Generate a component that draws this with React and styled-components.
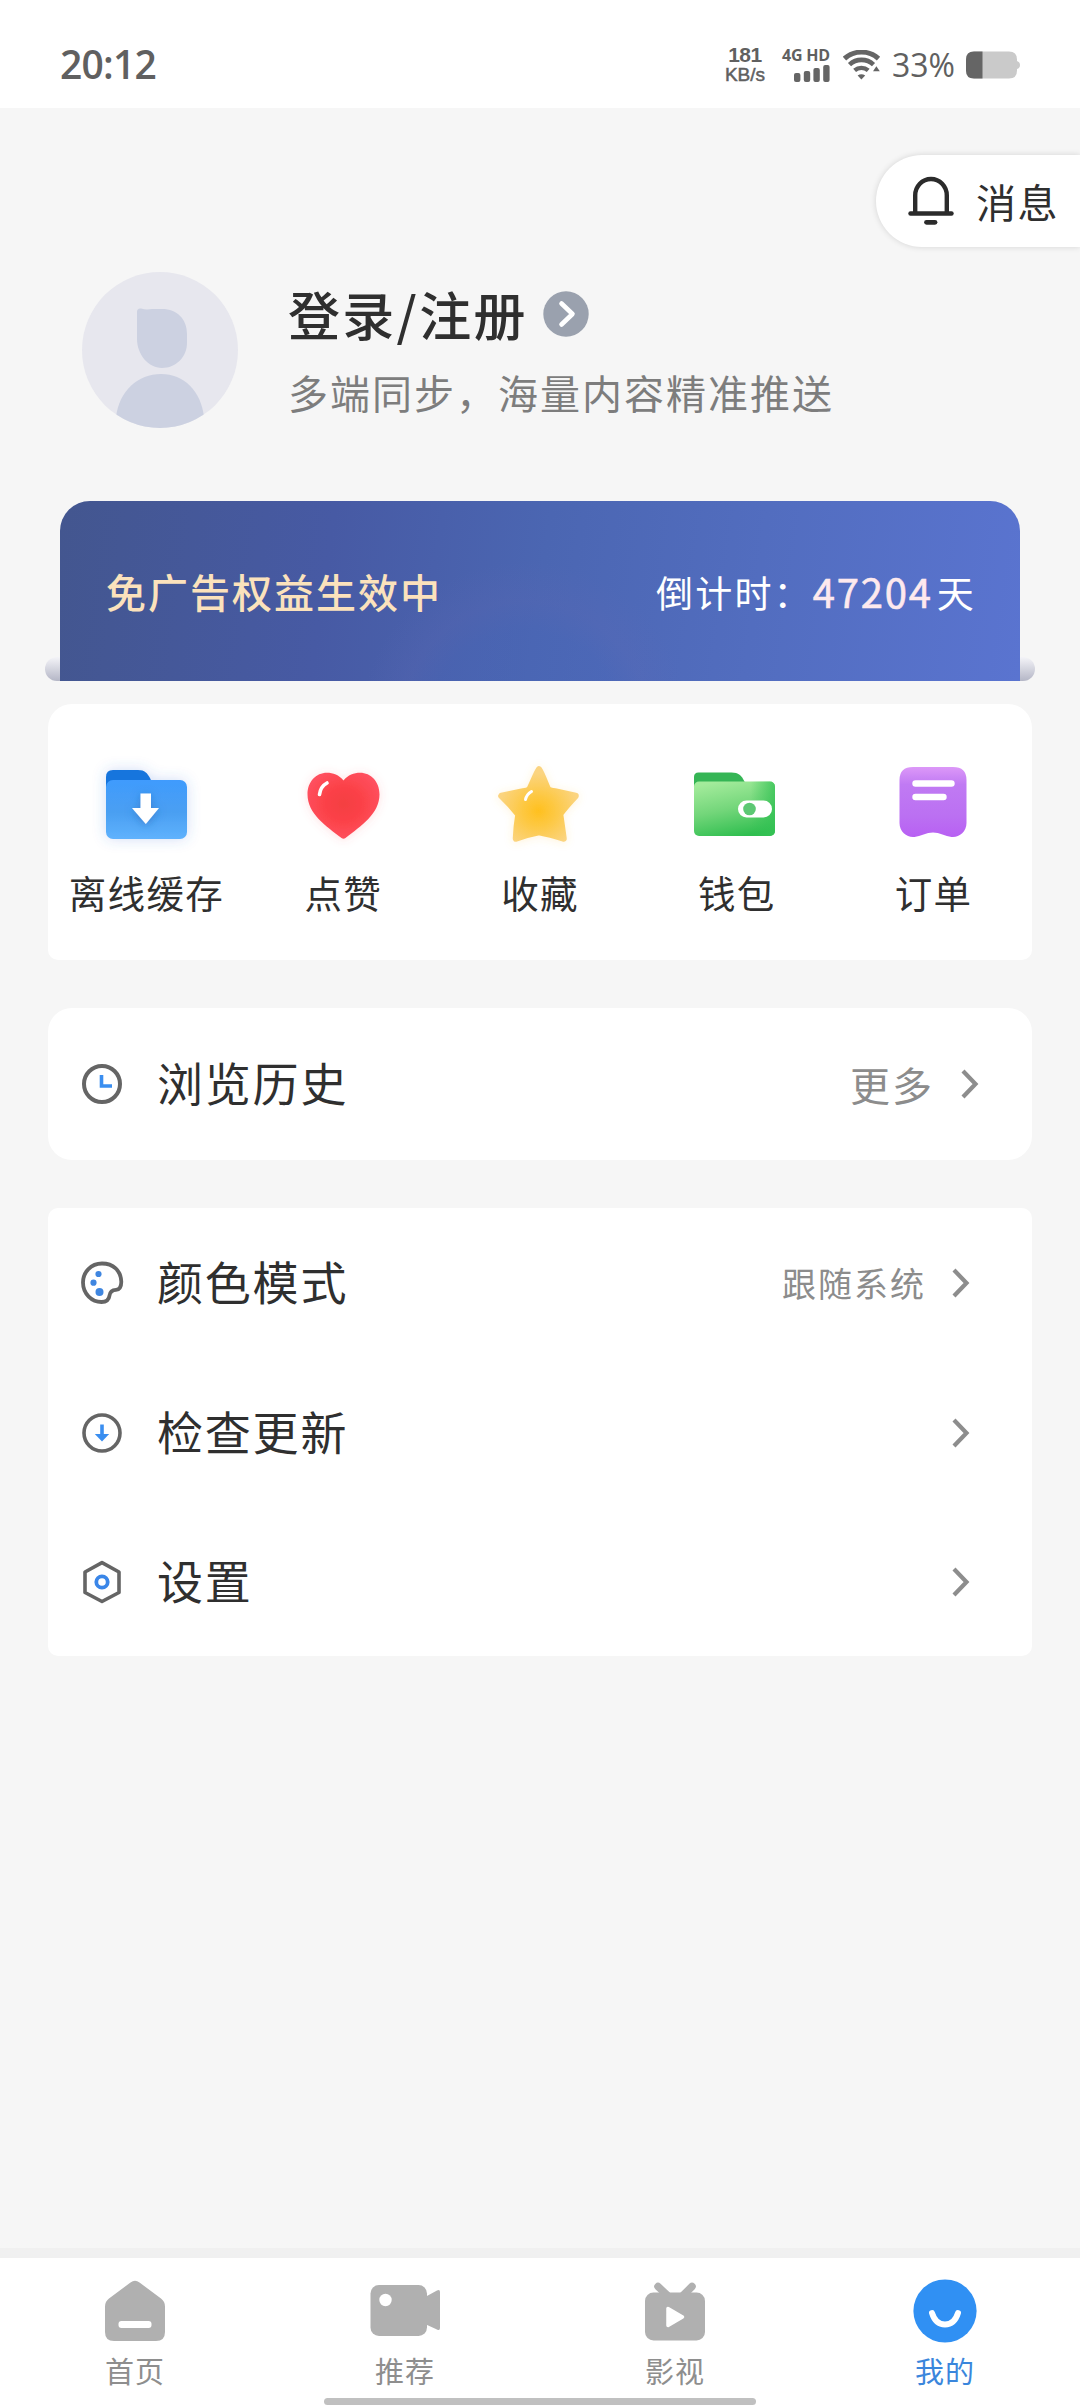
import styled, { createGlobalStyle } from 'styled-components';

const GlobalStyle = createGlobalStyle`
  * {
    box-sizing: border-box;
  }

  body {
    margin: 0;
    background: #f6f6f6;
    font-family: 'Noto Sans CJK SC', 'Noto Sans', sans-serif;
    color: #2f2f2f;
  }

  svg {
    display: block;
    flex-shrink: 0;
  }
`;

const WifiIcon = () => (
  <svg width="38" height="30" viewBox="0 0 38 30" fill="none" stroke="#656565">
    <path d="M1.5 8.600a25.500 25.500 0 0 1 34 0" strokeWidth="5" />
    <path d="M6.500 14.600a17.500 17.500 0 0 1 24 0" strokeWidth="4.600" />
    <path d="M11.600 20.400a10.500 10.500 0 0 1 13.600 0" strokeWidth="4.400" />
    <path d="M14.600 25.400l3.800 4.200 3.800-4.200q-3.800-2.400-7.600 0z" fill="#656565" stroke="none" />
    <path d="M30 21.200l3.400-5 3.400 5z" fill="#656565" stroke="none" />
  </svg>
);

const SignalIcon = () => (
  <svg width="36" height="17" viewBox="0 0 36 17" fill="#656565">
    <rect x="0" y="8" width="6.4" height="9" rx="2" />
    <rect x="9.8" y="6" width="6.4" height="11" rx="2" />
    <rect x="19.4" y="3" width="6.4" height="14" rx="2" />
    <rect x="29.2" y="0" width="6.4" height="17" rx="2" />
  </svg>
);

const BatteryIcon = () => (
  <svg width="54" height="28" viewBox="0 0 54 28">
    <path d="M8 0.5h35q8 0 8 8v1.5q3 1 3 4t-3 4v1.500q0 8-8 8H8q-8 0-8-8v-11q0-8 8-8z" fill="#cacaca" />
    <path d="M16.500 0.500H8q-8 0-8 8v11q0 8 8 8h8.500z" fill="#656565" />
  </svg>
);

const BellIcon = () => (
  <svg width="46" height="50" viewBox="0 0 46 50" fill="none" stroke="#2b2b2b" strokeWidth="4.400" strokeLinecap="round">
    <path d="M7.200 36V19.500a15.800 16.500 0 0 1 31.600 0V36" />
    <path d="M2.500 37.500h41" />
    <path d="M18.500 46.300h8.500" strokeWidth="4.800" />
  </svg>
);

const AvatarIcon = () => (
  <svg width="156" height="156" viewBox="0 0 156 156">
    <defs>
      <clipPath id="avatarClip">
        <circle cx="78" cy="78" r="78" />
      </clipPath>
    </defs>
    <circle cx="78" cy="78" r="78" fill="#e7e7ee" />
    <g clipPath="url(#avatarClip)" fill="#ccd1e1">
      <path d="M55 40q0-4 4-3.500 5 1.500 11 0.500h10c15 0 25 10 25 25v9c0 14-11 25-25 25s-25-14-25-29z" />
      <path d="M34 145c3-26 22-43 45-43s40 17 43 43v15H34z" />
    </g>
  </svg>
);

const ArrowBadge = () => (
  <svg width="46" height="46" viewBox="0 0 46 46" fill="none">
    <circle cx="23" cy="23" r="22.700" fill="#9aa1ae" />
    <path d="M18.500 12.500L29.500 23 18.500 33.500" stroke="#fff" strokeWidth="4.600" strokeLinecap="round" strokeLinejoin="round" />
  </svg>
);

const ChevronIcon = () => (
  <svg width="20" height="32" viewBox="0 0 20 32" fill="none" stroke="#8d8d8d" strokeWidth="4.200">
    <path d="M3 3L15.500 16 3 29" />
  </svg>
);

const DownloadFolder = () => (
  <svg width="96" height="96" viewBox="0 0 96 96" overflow="visible">
    <defs>
      <linearGradient id="folderFront" x1="0" y1="0" x2="0" y2="1">
        <stop offset="0" stopColor="#3f9bfd" />
        <stop offset="0.550" stopColor="#4a9ff2" />
        <stop offset="1" stopColor="#5fb2fd" />
      </linearGradient>
      <filter id="folderShadow" x="-30%" y="-30%" width="160%" height="160%">
        <feDropShadow dx="0" dy="0" stdDeviation="7" floodColor="#3b6fd8" floodOpacity="0.240" />
      </filter>
      <filter id="arrowShadow" x="-50%" y="-50%" width="200%" height="200%">
        <feDropShadow dx="0" dy="2" stdDeviation="4" floodColor="#1e5fb0" floodOpacity="0.500" />
      </filter>
    </defs>
    <g filter="url(#folderShadow)">
      <path d="M8 34V21q0-7 7-7h25c7 0 9 3 12 8l3 7v10H8z" fill="#1474dd" />
      <rect x="8" y="24" width="81" height="59" rx="7" fill="url(#folderFront)" />
    </g>
    <path d="M42.500 37.500h10.500V52h8L47.800 68 34 52h8.500z" fill="#fff" filter="url(#arrowShadow)" />
  </svg>
);

const HeartIcon = () => (
  <svg width="96" height="96" viewBox="0 0 96 96" overflow="visible">
    <defs>
      <radialGradient id="heartFill" cx="0.500" cy="0.470" r="0.550">
        <stop offset="0" stopColor="#f43f42" />
        <stop offset="0.450" stopColor="#fb4147" />
        <stop offset="1" stopColor="#ff505f" />
      </radialGradient>
      <filter id="heartShadow" x="-30%" y="-30%" width="160%" height="160%">
        <feDropShadow dx="0" dy="1" stdDeviation="5" floodColor="#ff5060" floodOpacity="0.180" />
      </filter>
    </defs>
    <path
      d="M48.500 24.500C53 19 59 16.800 65 16.800c11 0 19.500 9 19.500 21.500C84.500 58 66 70 50.500 82q-2 1.500-4 0C31 70 12.500 58 12.500 38.300c0-12.500 8.500-21.500 19.500-21.500 6 0 12 2.200 16.500 7.700z"
      fill="url(#heartFill)"
      filter="url(#heartShadow)"
    />
    <path d="M24.500 38.500q1-8 7.500-11.500" fill="none" stroke="#fff" strokeWidth="3.600" strokeLinecap="round" />
  </svg>
);

const StarIcon = () => (
  <svg width="96" height="96" viewBox="0 0 96 96" overflow="visible">
    <defs>
      <radialGradient id="starFill" cx="0.500" cy="0.600" r="0.550">
        <stop offset="0" stopColor="#ffc01f" />
        <stop offset="0.400" stopColor="#fdc842" />
        <stop offset="1" stopColor="#fbd480" />
      </radialGradient>
      <filter id="starShadow" x="-30%" y="-30%" width="160%" height="160%">
        <feDropShadow dx="0" dy="1" stdDeviation="4" floodColor="#ffc840" floodOpacity="0.200" />
      </filter>
    </defs>
    <path
      d="M47 13.500C50 18 53 27 56 33.500q2.500 1.500 7 2L83.500 40Q74 50 68 58q2 14 3.500 24.500Q58 78 47 76 36 78 24 82.500 24.500 70 26.500 58.500 19 49 9.500 40L31 35.500q4.500-.5 6.500-2C41 27 44 18 47 13.500z"
      fill="url(#starFill)"
      stroke="url(#starFill)"
      strokeWidth="6.500"
      strokeLinejoin="round"
      filter="url(#starShadow)"
    />
    <path d="M33.500 43.500q1-5 6-8" fill="none" stroke="#fff" strokeWidth="3" strokeLinecap="round" />
  </svg>
);

const WalletIcon = () => (
  <svg width="96" height="96" viewBox="0 0 96 96">
    <defs>
      <linearGradient id="walletFill" x1="0.300" y1="0" x2="0.600" y2="1">
        <stop offset="0" stopColor="#a3eb9b" />
        <stop offset="0.500" stopColor="#73d67a" />
        <stop offset="1" stopColor="#2fbe4f" />
      </linearGradient>
      <linearGradient id="walletEdge" x1="0" y1="0" x2="1" y2="0">
        <stop offset="0.700" stopColor="#35c255" stopOpacity="0" />
        <stop offset="1" stopColor="#35c255" stopOpacity="0.800" />
      </linearGradient>
    </defs>
    <path d="M5 32V21q0-4.500 4.500-4.500h33c7 0 10 3 13 9l3 6z" fill="#35b555" />
    <rect x="5" y="25.500" width="81" height="54.500" rx="5" fill="url(#walletFill)" />
    <rect x="5" y="25.500" width="81" height="54.500" rx="5" fill="url(#walletEdge)" />
    <rect x="49" y="44.500" width="34" height="17" rx="8.500" fill="#fff" />
    <circle cx="60.500" cy="53" r="6.300" fill="#5cc873" />
  </svg>
);

const OrderIcon = () => (
  <svg width="96" height="96" viewBox="0 0 96 96">
    <defs>
      <linearGradient id="orderFill" x1="0" y1="0" x2="0" y2="1">
        <stop offset="0" stopColor="#dc98f8" />
        <stop offset="0.250" stopColor="#c07af3" />
        <stop offset="0.700" stopColor="#bb70f2" />
        <stop offset="1" stopColor="#b860f3" />
      </linearGradient>
    </defs>
    <path
      d="M27 11h40q13.500 0 13.500 13v43c0 9-8 15-15 14-6-1-12-4.500-18.500-4.500S34.500 80 28.500 81c-7 1-15-5-15-14V24q0-13 13.500-13z"
      fill="url(#orderFill)"
    />
    <path d="M29.500 27.500h36M29.500 41h28" stroke="#fff" strokeWidth="6.400" strokeLinecap="round" />
  </svg>
);

const ClockIcon = () => (
  <svg width="44" height="44" viewBox="0 0 44 44" fill="none">
    <circle cx="22" cy="22" r="18" stroke="#656565" strokeWidth="4" />
    <path d="M21.500 13v11H32" stroke="#3a8ef0" strokeWidth="3.600" />
  </svg>
);

const PaletteIcon = () => (
  <svg width="44" height="44" viewBox="0 0 44 44" fill="none">
    <path
      d="M22 2.500C11 2.500 3 11 3 21.500 3 33 12 41 21.500 41c5 0 7.500-2.500 8-6.500.5-4 3-5.500 6.500-5.700 4-.2 5.300-3.300 5.300-8C41 9.500 33 2.500 22 2.500z"
      stroke="#656565"
      strokeWidth="3.800"
    />
    <circle cx="18.500" cy="13" r="3.100" fill="#3f86e0" />
    <circle cx="13.500" cy="21.700" r="3.100" fill="#3f86e0" />
    <circle cx="19.500" cy="31" r="4" fill="#3f86e0" />
  </svg>
);

const UpdateIcon = () => (
  <svg width="44" height="44" viewBox="0 0 44 44" fill="none">
    <circle cx="22" cy="22" r="18" stroke="#656565" strokeWidth="3.600" />
    <path d="M22 13.500v14" stroke="#3a8ef0" strokeWidth="3.600" />
    <path d="M14.800 23h14.400L22 30.500z" fill="#3a8ef0" />
  </svg>
);

const SettingsIcon = () => (
  <svg width="44" height="44" viewBox="0 0 44 44" fill="none">
    <path d="M22 2.600L39 12v20.500L22 41.500 5 32.500V12z" stroke="#656565" strokeWidth="3.600" strokeLinejoin="round" />
    <circle cx="22" cy="22" r="5.700" stroke="#3a86e8" strokeWidth="3.800" />
  </svg>
);

const HomeIcon = () => (
  <svg width="72" height="64" viewBox="0 0 72 64">
    <path d="M31.500 3.500q4.500-3.500 9 0L62 19.500q4 3 4 8V53q0 9-9 9H15q-9 0-9-9V27.500q0-5 4-8z" fill="#b0b0b0" />
    <rect x="19.500" y="42" width="33" height="7" rx="3" fill="#fff" />
  </svg>
);

const CameraIcon = () => (
  <svg width="72" height="64" viewBox="0 0 72 64">
    <rect x="1.500" y="6" width="56.500" height="51" rx="8.500" fill="#b0b0b0" />
    <path d="M57 17.500L68 11.500q3-1.500 3 1.500v36q0 3-3 1.500L57 45.500z" fill="#b0b0b0" />
    <circle cx="16.500" cy="21" r="6.200" fill="#fff" />
  </svg>
);

const TvIcon = () => (
  <svg width="72" height="64" viewBox="0 0 72 64">
    <path d="M19 7.500l9 8.500M53 7.500L44.500 16" stroke="#b0b0b0" strokeWidth="7.500" strokeLinecap="round" />
    <rect x="6" y="13.500" width="60" height="48" rx="8.500" fill="#b0b0b0" />
    <path d="M29 29.500v17l14.500-8.500z" fill="#fff" stroke="#fff" strokeWidth="3.500" strokeLinejoin="round" />
  </svg>
);

const MineIcon = () => (
  <svg width="72" height="64" viewBox="0 0 72 64">
    <circle cx="36" cy="32" r="31.600" fill="#3090f3" />
    <path d="M23 34q3.500 11.500 13 11.500t13-11.500" fill="none" stroke="#fff" strokeWidth="6" strokeLinecap="round" />
  </svg>
);

const shortcuts = [
  { label: '离线缓存', Icon: DownloadFolder },
  { label: '点赞', Icon: HeartIcon },
  { label: '收藏', Icon: StarIcon },
  { label: '钱包', Icon: WalletIcon },
  { label: '订单', Icon: OrderIcon },
];

const settings = [
  { label: '颜色模式', hint: '跟随系统', Icon: PaletteIcon },
  { label: '检查更新', Icon: UpdateIcon },
  { label: '设置', Icon: SettingsIcon },
];

const tabs = [
  { label: '首页', Icon: HomeIcon },
  { label: '推荐', Icon: CameraIcon },
  { label: '影视', Icon: TvIcon },
  { label: '我的', Icon: MineIcon, active: true },
];

const App = () => {
  return (
    <>
      <GlobalStyle />
      <Screen>
        <StatusBar>
          <Clock>20:12</Clock>
          <NetSpeed>
            <b>181</b>
            <span>KB/s</span>
          </NetSpeed>
          <Network>
            <span>4G HD</span>
            <SignalIcon />
          </Network>
          <WifiIcon />
          <Percent>33%</Percent>
          <BatteryIcon />
        </StatusBar>

        <MessageButton>
          <BellIcon />
          <span>消息</span>
        </MessageButton>

        <Profile>
          <AvatarIcon />
          <div>
            <LoginLine>
              <span>登录/注册</span>
              <ArrowBadge />
            </LoginLine>
            <Slogan>多端同步，海量内容精准推送</Slogan>
          </div>
        </Profile>

        <BannerSlot>
          <Banner>
            <BannerTitle>免广告权益生效中</BannerTitle>
            <Countdown>
              倒计时：<strong>47204</strong>天
            </Countdown>
          </Banner>
        </BannerSlot>

        <ShortcutCard>
          {shortcuts.map(({ label, Icon }) => (
            <Shortcut key={label}>
              <Icon />
              <span>{label}</span>
            </Shortcut>
          ))}
        </ShortcutCard>

        <ListCard $radius="24px" $height="152px">
          <Row $height="152px" $right="52px">
            <ClockIcon />
            <RowLabel>浏览历史</RowLabel>
            <RowHint $size="40px" $gap="26px">更多</RowHint>
            <ChevronIcon />
          </Row>
        </ListCard>

        <ListCard $radius="10px" $height="448px">
          {settings.map(({ label, hint, Icon }) => (
            <Row key={label} $height="149.800px" $right="61px">
              <Icon />
              <RowLabel>{label}</RowLabel>
              {hint && <RowHint $size="34px" $gap="25px">{hint}</RowHint>}
              <ChevronIcon />
            </Row>
          ))}
        </ListCard>

        <TabBar>
          <Tabs>
            {tabs.map(({ label, Icon, active }) => (
              <Tab key={label} $active={active}>
                <Icon />
                <span>{label}</span>
              </Tab>
            ))}
          </Tabs>
          <HomeIndicator />
        </TabBar>
      </Screen>
    </>
  );
};
export default App;

const Screen = styled.div`
  display: flex;
  flex-direction: column;
  width: 1080px;
  height: 2408px;
  overflow: hidden;
  background: #f6f6f6;
`;

const StatusBar = styled.header`
  display: flex;
  align-items: center;
  height: 108px;
  padding: 22px 60px 0 60px;
  background: #fff;
  color: #606060;
  font-family: 'Open Sans', sans-serif;
  line-height: 1;
`;

const Clock = styled.div`
  margin-right: auto;
  padding-bottom: 4px;
  font-size: 39px;
  font-weight: 600;
  letter-spacing: -0.800px;
`;

const NetSpeed = styled.div`
  display: flex;
  flex-direction: column;
  align-items: center;
  width: 46px;
  margin-right: 14px;
  padding-bottom: 2px;
  font-family: 'Liberation Sans', sans-serif;

  & b {
    font-size: 21px;
    line-height: 21px;
    font-weight: 600;
    letter-spacing: -0.500px;
  }

  & span {
    font-size: 19px;
    line-height: 19px;
    -webkit-text-stroke: 0.500px #606060;
  }
`;

const Network = styled.div`
  display: flex;
  flex-direction: column;
  align-items: flex-end;
  gap: 2px;
  width: 48px;
  margin-right: 13px;
  padding-bottom: 2px;

  & span {
    font-size: 16px;
    line-height: 16px;
    font-weight: 700;
    letter-spacing: -0.200px;
    white-space: nowrap;
  }
`;

const Percent = styled.div`
  margin: 0 11px 0 11px;
  font-size: 32px;
  font-weight: 500;
`;

const MessageButton = styled.div`
  display: flex;
  align-items: center;
  align-self: flex-end;
  gap: 22px;
  width: 204px;
  height: 92px;
  margin-top: 47px;
  padding-left: 32px;
  border-radius: 46px 0 0 46px;
  background: #fff;
  box-shadow: 0 0 6px rgba(0, 0, 0, 0.14);

  & span {
    font-size: 40px;
    line-height: 1;
    letter-spacing: 1.500px;
    white-space: nowrap;
  }
`;

const Profile = styled.section`
  display: flex;
  gap: 50px;
  height: 156px;
  margin: 25px 0 0 82px;
`;

const LoginLine = styled.div`
  display: flex;
  align-items: center;
  gap: 15px;
  margin-top: 17px;
  height: 50px;

  & span {
    font-size: 52px;
    line-height: 1;
    font-weight: 500;
    letter-spacing: 2.300px;
  }
`;

const Slogan = styled.p`
  margin: 33px 0 0;
  font-size: 40px;
  line-height: 1;
  letter-spacing: 2px;
  color: #7d7d7d;
`;

const BannerSlot = styled.section`
  position: relative;
  width: 990px;
  margin: 73px auto 0;
  padding: 0 15px;

  /* rail under the banner, visible at both ends */
  &::before {
    content: '';
    position: absolute;
    left: 0;
    right: 0;
    bottom: 0;
    height: 24px;
    border-radius: 12px;
    background: linear-gradient(#f4f4f8, #b4b6c6);
  }
`;

const Banner = styled.div`
  position: relative;
  display: flex;
  align-items: center;
  justify-content: space-between;
  height: 180px;
  padding: 0 44px 0 46px;
  border-radius: 30px 30px 0 0;
  background:
    radial-gradient(circle at 465px 225px, rgba(72, 102, 186, 0.25) 0 95px, rgba(94, 104, 182, 0.2) 125px, rgba(94, 104, 182, 0) 165px),
    linear-gradient(98deg, #43568f 0%, #475aa4 28%, #4b66b2 50%, #526dbf 72%, #5a74d0 100%);
`;

const BannerTitle = styled.div`
  font-size: 40px;
  line-height: 1;
  font-weight: 500;
  letter-spacing: 2px;
  color: #fbe2bc;
`;

const Countdown = styled.div`
  font-size: 37px;
  line-height: 40px;
  letter-spacing: 2.200px;
  color: #fff;

  & strong {
    margin-right: 4px;
    font-size: 40px;
    font-weight: 400;
    letter-spacing: 1.800px;
    color: #fde9ee;
    -webkit-text-stroke: 0.600px #fde9ee;
  }
`;

const ShortcutCard = styled.section`
  display: grid;
  grid-template-columns: repeat(5, 1fr);
  height: 256px;
  margin: 23px 48px 0;
  padding-top: 52px;
  border-radius: 24px 24px 10px 10px;
  background: #fff;
`;

const Shortcut = styled.div`
  display: flex;
  flex-direction: column;
  align-items: center;
  gap: 21px;

  & span {
    font-size: 37.500px;
    line-height: 1;
    letter-spacing: 1.300px;
  }
`;

const ListCard = styled.section`
  height: ${({ $height }) => $height};
  margin: 48px 48px 0;
  border-radius: ${({ $radius }) => $radius};
  background: #fff;
`;

const Row = styled.div`
  display: flex;
  align-items: center;
  height: ${({ $height }) => $height};
  padding: 0 ${({ $right }) => $right} 0 32px;
`;

const RowLabel = styled.div`
  margin: 0 auto 0 33px;
  padding-bottom: 6px;
  font-size: 46px;
  line-height: 1;
  letter-spacing: 1.800px;
`;

const RowHint = styled.div`
  margin-right: ${({ $gap }) => $gap};
  font-size: ${({ $size }) => $size};
  line-height: 1;
  letter-spacing: 2px;
  color: #8c8c8c;
`;

const TabBar = styled.nav`
  margin-top: auto;
  height: 160px;
  border-top: 10px solid #f0f0f0;
  background: #fff;
`;

const Tabs = styled.div`
  display: grid;
  grid-template-columns: repeat(4, 1fr);
  height: 140px;
  padding-top: 21px;
`;

const Tab = styled.div`
  display: flex;
  flex-direction: column;
  align-items: center;
  gap: 13px;

  & span {
    font-size: 29px;
    line-height: 1;
    letter-spacing: 1px;
    color: ${({ $active }) => ($active ? '#3a86dc' : '#8e8e8e')};
  }
`;

const HomeIndicator = styled.div`
  width: 432px;
  height: 7px;
  margin: 0 auto;
  border-radius: 4px;
  background: #c0c0c0;
`;
